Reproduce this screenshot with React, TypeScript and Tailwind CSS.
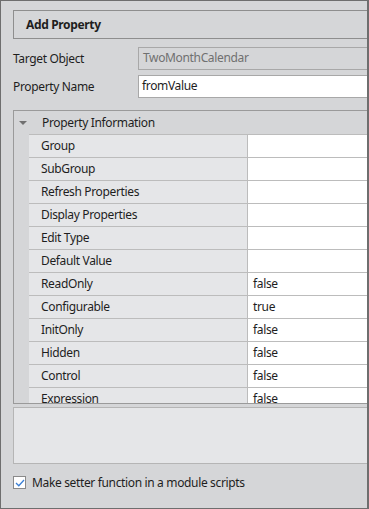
import React, { ReactElement } from "react";

interface Row {
  name: string;
  value: string;
}

const rows: Row[] = [
  { name: "Group", value: "" },
  { name: "SubGroup", value: "" },
  { name: "Refresh Properties", value: "" },
  { name: "Display Properties", value: "" },
  { name: "Edit Type", value: "" },
  { name: "Default Value", value: "" },
  { name: "ReadOnly", value: "false" },
  { name: "Configurable", value: "true" },
  { name: "InitOnly", value: "false" },
  { name: "Hidden", value: "false" },
  { name: "Control", value: "false" },
  { name: "Expression", value: "false" },
];

function PropertyGrid(): ReactElement {
  return (
    <div className="ml-[12px] mt-[12px] h-[294px] border border-r-0 border-[#9a9a9a] overflow-hidden">
      <div className="flex h-[23px] items-center bg-[#d5d6d8]">
        <div className="w-[15px] flex justify-center">
          <svg width="8" height="5" viewBox="0 0 8 5" className="ml-[2px] mt-[1px]">
            <polygon points="0,0 8,0 4,4" fill="#707070" />
          </svg>
        </div>
        <span className="pl-[13px] leading-[20px]">Property Information</span>
      </div>
      <div className="flex">
        <div className="w-[15px] shrink-0 bg-[#d5d6d8]" />
        <div className="flex-1">
          {rows.map((row) => (
            <div key={row.name} className="flex h-[23px] border-t border-[#bcbcbc]">
              <div className="w-[219px] shrink-0 bg-[#e5e6e8] pl-[12px] leading-[21px] border-r border-[#bcbcbc]">
                {row.name}
              </div>
              <div className="flex-1 bg-white pl-[5px] leading-[21px]">{row.value}</div>
            </div>
          ))}
        </div>
      </div>
    </div>
  );
}

export default function App(): ReactElement {
  return (
    <div
      className="w-[369px] h-[509px] bg-[#d5d6d8] border-l border-t border-b border-r-2 border-[#6e6e6e] text-[12px] tracking-[-0.35px] text-[#1e1e1e] overflow-hidden"
      style={{ fontFamily: '"Noto Sans", "Open Sans", sans-serif' }}
    >
      <div className="ml-[12px] mt-[9px] h-[29px] border border-r-0 border-[#8e8e8e] flex items-center pl-[12px] font-bold">
        Add Property
      </div>

      <div className="flex items-center mt-[8px] ml-[12px] h-[23px]">
        <div className="w-[125px] leading-[20px]">Target Object</div>
        <div className="flex-1 h-full border border-r-0 border-[#a8a8a8] pl-[4px] leading-[20px] text-[#707070]">
          TwoMonthCalendar
        </div>
      </div>
      <div className="flex items-center mt-[5px] ml-[12px] h-[23px]">
        <div className="w-[125px] leading-[20px]">Property Name</div>
        <div className="flex-1 h-full border border-r-0 border-[#a8a8a8] bg-white pl-[3px] leading-[20px]">
          fromValue
        </div>
      </div>

      <PropertyGrid />

      <div className="ml-[12px] mt-[3px] h-[57px] border border-r-0 border-[#b5b5b5] bg-[#e5e6e8]" />

      <div className="flex items-center ml-[12px] mt-[12px]">
        <div className="w-[13px] h-[13px] border border-[#8a8a8a] bg-white flex items-center justify-center">
          <svg width="10" height="8" viewBox="0 0 10 8">
            <polyline points="1,4 3.8,6.8 9,1" fill="none" stroke="#3a7fd5" strokeWidth="1.3" />
          </svg>
        </div>
        <span className="ml-[6px] leading-[12px]">Make setter function in a module scripts</span>
      </div>
    </div>
  );
}
